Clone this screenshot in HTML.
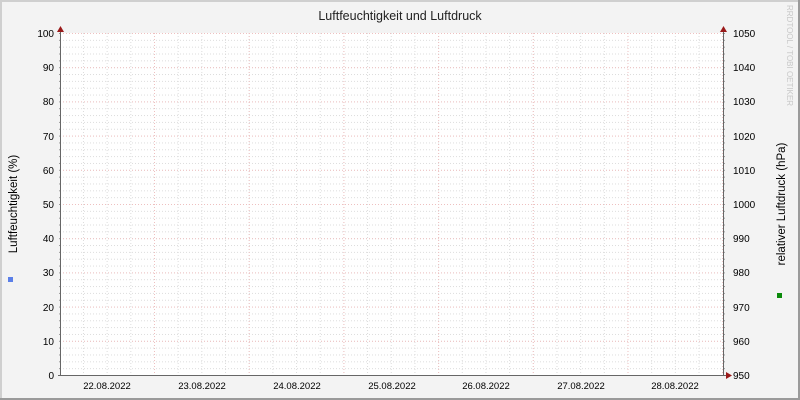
<!DOCTYPE html>
<html><head><meta charset="utf-8"><style>
html,body{margin:0;padding:0;background:#f3f3f3;}
svg{display:block;font-family:"Liberation Sans",sans-serif;}
</style></head><body>
<svg width="800" height="400" viewBox="0 0 800 400" xmlns="http://www.w3.org/2000/svg">
<defs>
<pattern id="hmin" x="0" y="33" width="800" height="6.84" patternUnits="userSpaceOnUse">
<line x1="0" y1="0.5" x2="800" y2="0.5" stroke="#dcdcdc" stroke-width="1" stroke-dasharray="1,2"/></pattern>
<pattern id="vmin" x="154" y="0" width="23.675" height="400" patternUnits="userSpaceOnUse">
<line x1="0.5" y1="0" x2="0.5" y2="400" stroke="#dcdcdc" stroke-width="1" stroke-dasharray="1,2"/></pattern>
<pattern id="hmaj" x="0" y="33" width="800" height="34.2" patternUnits="userSpaceOnUse">
<line x1="0" y1="0.5" x2="800" y2="0.5" stroke="#eec0c0" stroke-width="1" stroke-dasharray="1,2"/></pattern>
<pattern id="vmaj" x="154" y="0" width="94.7" height="400" patternUnits="userSpaceOnUse">
<line x1="0.5" y1="0" x2="0.5" y2="400" stroke="#eec0c0" stroke-width="1" stroke-dasharray="1,2"/></pattern>
<pattern id="ltick" x="0" y="33" width="800" height="6.84" patternUnits="userSpaceOnUse">
<line x1="0" y1="0.5" x2="800" y2="0.5" stroke="#999" stroke-width="1"/></pattern>
</defs>
<rect x="0" y="0" width="800" height="400" fill="#f3f3f3"/>
<rect x="0" y="0" width="800" height="2" fill="#cfcfcf"/>
<rect x="0" y="0" width="2" height="400" fill="#cfcfcf"/>
<rect x="0" y="398" width="800" height="2" fill="#9a9a9a"/>
<rect x="798" y="0" width="2" height="400" fill="#9a9a9a"/>
<rect x="61" y="33" width="662" height="342" fill="#fff"/>
<rect x="61" y="33" width="662" height="342" fill="url(#hmin)"/>
<rect x="61" y="33" width="662" height="342" fill="url(#vmin)"/>
<rect x="61" y="33" width="662" height="342" fill="url(#hmaj)"/>
<rect x="61" y="33" width="662" height="342" fill="url(#vmaj)"/>
<rect x="59" y="33" width="1" height="342" fill="url(#ltick)"/>
<rect x="724" y="33" width="1" height="342" fill="url(#ltick)"/>
<line x1="60.5" y1="28" x2="60.5" y2="376" stroke="#666"/>
<line x1="723.5" y1="28" x2="723.5" y2="376" stroke="#666"/>
<line x1="58" y1="375.5" x2="728" y2="375.5" stroke="#666"/>
<polygon points="57,32 64,32 60.5,26" fill="#9a1a1a"/>
<polygon points="720,32 727,32 723.5,26" fill="#9a1a1a"/>
<polygon points="726,372 726,379 732,375.5" fill="#9a1a1a"/>
<text x="400" y="20" text-anchor="middle" font-size="12.5" fill="#222">Luftfeuchtigkeit und Luftdruck</text>
<g font-size="10" fill="#000" text-anchor="end">
<text x="54" y="37">100</text><text x="54" y="71">90</text><text x="54" y="105">80</text><text x="54" y="140">70</text><text x="54" y="174">60</text><text x="54" y="208">50</text><text x="54" y="242">40</text><text x="54" y="276">30</text><text x="54" y="311">20</text><text x="54" y="345">10</text><text x="54" y="379">0</text>
</g>
<g font-size="10" fill="#000">
<text x="733" y="37">1050</text><text x="733" y="71">1040</text><text x="733" y="105">1030</text><text x="733" y="140">1020</text><text x="733" y="174">1010</text><text x="733" y="208">1000</text><text x="733" y="242">990</text><text x="733" y="276">980</text><text x="733" y="311">970</text><text x="733" y="345">960</text><text x="733" y="379">950</text>
</g>
<g font-size="9.5" fill="#000" text-anchor="middle">
<text x="107" y="389">22.08.2022</text><text x="202" y="389">23.08.2022</text><text x="297" y="389">24.08.2022</text><text x="392" y="389">25.08.2022</text><text x="486" y="389">26.08.2022</text><text x="581" y="389">27.08.2022</text><text x="675" y="389">28.08.2022</text>
</g>
<text transform="translate(17,204) rotate(-90)" text-anchor="middle" font-size="11.5" fill="#000">Luftfeuchtigkeit (%)</text>
<text transform="translate(785,204) rotate(-90)" text-anchor="middle" font-size="11.5" fill="#000">relativer Luftdruck (hPa)</text>
<text transform="translate(787,5) rotate(90)" font-size="8" fill="#c8c8c8">RRDTOOL / TOBI OETIKER</text>
<rect x="8" y="277" width="5" height="5" fill="#5b7fe8"/>
<rect x="777" y="293" width="5" height="5" fill="#0a8a0a"/>
</svg>
</body></html>
